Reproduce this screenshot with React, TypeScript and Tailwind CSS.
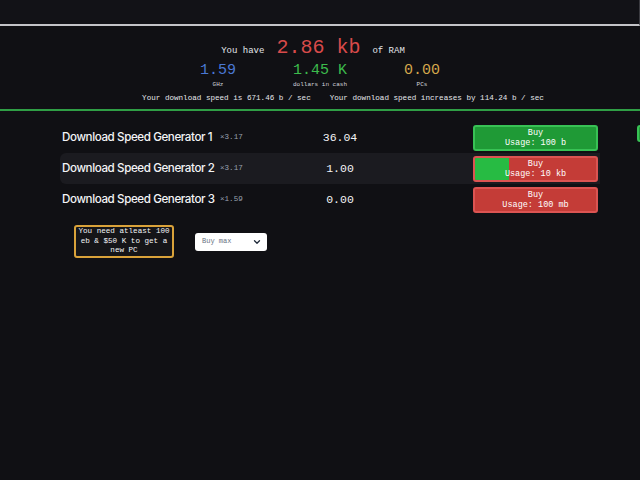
import { ChevronDown } from "lucide-react";

interface Generator {
    name: string;
    mult: string;
    amount: string;
    usage: string;
    affordable: boolean;
    progress: number;
}

const generators: Generator[] = [
    { name: "Download Speed Generator 1", mult: "×3.17", amount: "36.04", usage: "Usage: 100 b", affordable: true, progress: 0 },
    { name: "Download Speed Generator 2", mult: "×3.17", amount: "1.00", usage: "Usage: 10 kb", affordable: false, progress: 28 },
    { name: "Download Speed Generator 3", mult: "×1.59", amount: "0.00", usage: "Usage: 100 mb", affordable: false, progress: 0 },
];

const mono = "font-['Liberation_Mono','DejaVu_Sans_Mono',monospace]";

const Stat = ({ value, label, color }: { value: string; label: string; color: string }) => (
    <div className="flex flex-col items-center">
        <span className={`text-[15px] leading-[18px] ${color}`}>{value}</span>
        <span className="text-[6px] leading-[8px] text-gray-300 mt-[1px]">{label}</span>
    </div>
);

export default function App() {
    return (
        <div className={`w-[640px] h-[480px] overflow-hidden bg-[#101014] text-white ${mono}`}>
            <div className="h-[26px] bg-[#121217] border-b-2 border-[#c4c4c8] border-r border-r-[#3a3a40]" />

            <div className="flex flex-col items-center pt-[10px]">
                <div className="flex items-baseline gap-[12px] h-[24px] pr-[14px]">
                    <span className="text-[9px] text-gray-200">You have</span>
                    <span className="text-[20px] leading-[24px] text-[#d84a4a]">2.86 kb</span>
                    <span className="text-[9px] text-gray-200">of RAM</span>
                </div>
                <div className="grid grid-cols-3 w-[306px] mt-[2px]">
                    <Stat value="1.59" label="GHz" color="text-[#4a78d4]" />
                    <Stat value="1.45 K" label="dollars in cash" color="text-[#3cbb4c]" />
                    <Stat value="0.00" label="PCs" color="text-[#d4a84c]" />
                </div>
                <div className="flex gap-[19px] text-[7.6px] text-gray-200 mt-[5px] h-[10px] items-center pl-[46px]">
                    <span>Your download speed is 671.46 b / sec</span>
                    <span>Your download speed increases by 114.24 b / sec</span>
                </div>
            </div>
            <div className="h-[2px] bg-[#2f9e45] mt-[5px]" />

            <div className="ml-[60px] w-[540px] mt-[11px] flex flex-col">
                {generators.map((g, i) => (
                    <div key={i} className={`relative flex items-center h-[31px] rounded-l-md ${i === 1 ? "bg-[#1b1b20]" : ""}`}>
                        <span className="font-['Inter',sans-serif] text-[11.6px] font-medium tracking-[-0.4px] pl-[2px] w-[160px] shrink-0 whitespace-nowrap text-gray-100">{g.name}</span>
                        <span className="text-[7.6px] text-gray-400 w-[80px] shrink-0">{g.mult}</span>
                        <span className="text-[11.5px] text-gray-100 w-[80px] shrink-0 text-center">{g.amount}</span>
                        <button
                            className={`relative overflow-hidden ml-auto mr-[2px] w-[125px] h-[26px] rounded-[3px] border-2 text-[8.5px] leading-[10px] text-white ${g.affordable ? "bg-[#1f9a36] border-[#38c255]" : "bg-[#c43c37] border-[#dc5452]"}`}
                        >
                            {g.progress > 0 && (
                                <span className="absolute left-0 top-0 bottom-0 bg-[#27bb43]" style={{ width: `${g.progress}%` }} />
                            )}
                            <span className="relative flex flex-col items-center">
                                <span>Buy</span>
                                <span>{g.usage}</span>
                            </span>
                        </button>
                        {i === 0 && (
                            <div className="absolute left-[577px] top-[3px] w-[10px] h-[17px] rounded-[3px] bg-[#1f9a36] border-2 border-[#38c255]" />
                        )}
                    </div>
                ))}
            </div>

            <div className="flex items-center ml-[74px] mt-[10px] gap-[21px]">
                <div className="w-[100px] h-[33px] rounded-[3px] border-2 border-[#d9a23a] bg-[#151518] text-[7.6px] leading-[9.5px] text-gray-100 text-center flex items-center justify-center">
                    You need atleast 100 eb &amp; $50 K to get a new PC
                </div>
                <div className="w-[72px] h-[18px] rounded-[3px] bg-white flex items-center justify-between pl-[7px] pr-[5px]">
                    <span className="text-[7px] text-gray-500">Buy max</span>
                    <ChevronDown className="w-[10px] h-[10px] text-gray-800" strokeWidth={3} />
                </div>
            </div>
        </div>
    );
}
